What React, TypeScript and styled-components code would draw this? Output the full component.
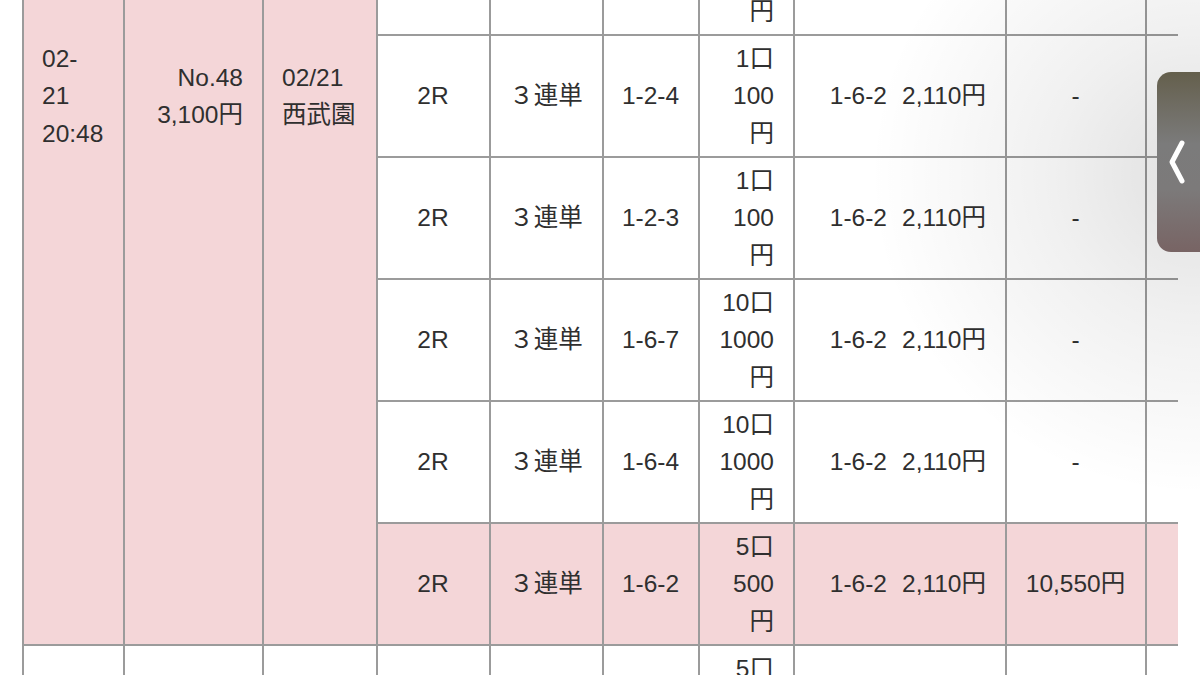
import React from 'react';
import styled, { createGlobalStyle } from 'styled-components';

const Global = createGlobalStyle`
  html, body { margin: 0; padding: 0; background: #fff; }
  body { font-family: "Liberation Sans", "Noto Sans CJK JP", sans-serif; }
`;

const Page = styled.div`
  position: relative;
  width: 1200px;
  height: 675px;
  overflow: hidden;
  background: #fff;
  padding-left: 22px;
  box-sizing: border-box;
`;

const Clip = styled.div`
  width: 1156px;
  height: 675px;
  overflow: hidden;
`;

const Grid = styled.div`
  display: grid;
  grid-template-columns: 99px 137px 112px 111px 111px 94px 93px 210px 138px 100px;
  grid-auto-rows: 120px;
  gap: 2px;
  padding: 2px;
  background: #9b9b9b;
  width: max-content;
  margin-top: -454px;
  font-family: "Liberation Sans", "Noto Sans CJK JP", sans-serif;
  font-size: 24.5px;
  line-height: 37.5px;
  color: #2f2f2f;
`;

type Align = 'left' | 'center' | 'right';

const Cell = styled.div<{ $align?: Align; $hl?: boolean; $span?: number }>`
  background: ${(p) => (p.$hl ? '#f4d6d8' : '#fff')};
  grid-row: ${(p) => (p.$span ? `span ${p.$span}` : 'auto')};
  display: flex;
  align-items: center;
  justify-content: ${(p) =>
    p.$align === 'left' ? 'flex-start' : p.$align === 'right' ? 'flex-end' : 'center'};
  text-align: ${(p) => p.$align || 'center'};
  padding: 0 19px 0 18px;
  white-space: nowrap;
  box-sizing: border-box;
`;

const Gap = styled.span`
  display: inline-block;
  width: 15px;
`;

const Shade = styled.div`
  position: absolute;
  inset: 0;
  pointer-events: none;
  background: radial-gradient(
    ellipse 330px 320px at 100% 175px,
    rgba(0, 0, 0, 0.12) 0%,
    rgba(0, 0, 0, 0.06) 45%,
    rgba(0, 0, 0, 0) 100%
  );
`;

const Handle = styled.button`
  position: absolute;
  right: 0;
  top: 72px;
  width: 43px;
  height: 180px;
  border: none;
  padding: 0 0 0 12px;
  border-radius: 14px 0 0 14px;
  background: linear-gradient(
    to bottom,
    #645f4c 0%,
    #6f6c62 18%,
    #7b7b7b 40%,
    #7c7a7a 65%,
    #786464 100%
  );
  display: flex;
  align-items: center;
  justify-content: flex-start;
  box-sizing: border-box;
`;

type Row = {
  race: string;
  kind: string;
  pick: string;
  qty: string[];
  result: [string, string];
  payout: string;
  hit?: boolean;
};

type Group = {
  date: string[];
  no: string[];
  venue: string[];
  rows: Row[];
};

const res: [string, string] = ['1-6-2', '2,110円'];
const res2: [string, string] = ['2-1-3', '1,240円'];

const groups: Group[] = [
  {
    date: ['02-', '21', '20:48'],
    no: ['No.48', '3,100円'],
    venue: ['02/21', '西武園'],
    rows: [
      { race: '2R', kind: '３連単', pick: '1-2-6', qty: ['1口', '100', '円'], result: res, payout: '-' },
      { race: '2R', kind: '３連単', pick: '1-2-7', qty: ['1口', '100', '円'], result: res, payout: '-' },
      { race: '2R', kind: '３連単', pick: '1-2-5', qty: ['1口', '100', '円'], result: res, payout: '-' },
      { race: '2R', kind: '３連単', pick: '1-2-7', qty: ['1口', '100', '円'], result: res, payout: '-' },
      { race: '2R', kind: '３連単', pick: '1-2-4', qty: ['1口', '100', '円'], result: res, payout: '-' },
      { race: '2R', kind: '３連単', pick: '1-2-3', qty: ['1口', '100', '円'], result: res, payout: '-' },
      { race: '2R', kind: '３連単', pick: '1-6-7', qty: ['10口', '1000', '円'], result: res, payout: '-' },
      { race: '2R', kind: '３連単', pick: '1-6-4', qty: ['10口', '1000', '円'], result: res, payout: '-' },
      { race: '2R', kind: '３連単', pick: '1-6-2', qty: ['5口', '500', '円'], result: res, payout: '10,550円', hit: true },
    ],
  },
  {
    date: ['02-', '21', '20:30'],
    no: ['No.47', '1,500円'],
    venue: ['02/21', '西武園'],
    rows: [
      { race: '1R', kind: '３連単', pick: '2-1-6', qty: ['5口', '500', '円'], result: res2, payout: '-' },
      { race: '1R', kind: '３連単', pick: '2-1-3', qty: ['5口', '500', '円'], result: res2, payout: '-' },
      { race: '1R', kind: '３連単', pick: '2-1-5', qty: ['5口', '500', '円'], result: res2, payout: '-' },
    ],
  },
];

const Lines: React.FC<{ items: string[] }> = ({ items }) => (
  <span>
    {items.map((t, i) => (
      <React.Fragment key={i}>
        {i > 0 && <br />}
        {t}
      </React.Fragment>
    ))}
  </span>
);

export default function App() {
  return (
    <>
      <Global />
      <Page>
        <Clip>
          <Grid>
            {groups.map((g, gi) => {
              const hl = g.rows.some((r) => r.hit);
              return (
                <React.Fragment key={gi}>
                  <Cell $span={g.rows.length} $align="left" $hl={hl}>
                    <Lines items={g.date} />
                  </Cell>
                  <Cell $span={g.rows.length} $align="right" $hl={hl}>
                    <Lines items={g.no} />
                  </Cell>
                  <Cell $span={g.rows.length} $align="left" $hl={hl}>
                    <Lines items={g.venue} />
                  </Cell>
                  {g.rows.map((r, ri) => (
                    <React.Fragment key={ri}>
                      <Cell $hl={r.hit}>{r.race}</Cell>
                      <Cell $hl={r.hit}>{r.kind}</Cell>
                      <Cell $hl={r.hit}>{r.pick}</Cell>
                      <Cell $hl={r.hit} $align="right">
                        <Lines items={r.qty} />
                      </Cell>
                      <Cell $hl={r.hit} $align="right">
                        {r.result[0]}
                        <Gap />
                        {r.result[1]}
                      </Cell>
                      <Cell $hl={r.hit}>{r.payout}</Cell>
                      <Cell $hl={r.hit} />
                    </React.Fragment>
                  ))}
                </React.Fragment>
              );
            })}
          </Grid>
        </Clip>
        <Shade />
        <Handle aria-label="open">
          <svg width="18" height="48" viewBox="0 0 18 48" fill="none">
            <path
              d="M13 5 L3 24 L13 43"
              stroke="#fff"
              strokeWidth="5"
              strokeLinecap="round"
              strokeLinejoin="round"
            />
          </svg>
        </Handle>
      </Page>
    </>
  );
}
